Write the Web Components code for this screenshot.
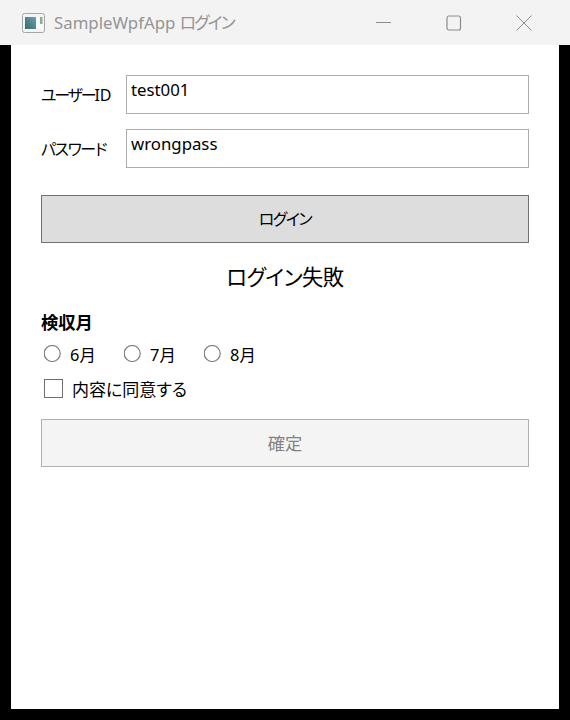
<!DOCTYPE html>
<html lang="ja">
<head>
<meta charset="utf-8">
<title>SampleWpfApp ログイン</title>
<style>
  html, body { margin: 0; height: 100%; background: #000; }
  body { font-family: "Noto Sans", "Noto Sans CJK JP", sans-serif; font-size: 16px; color: #000; font-feature-settings: "palt"; }
</style>
</head>
<body>
<wpf-window caption="SampleWpfApp" caption-kana="ログイン">
  <form-row label="ユーザー" label-latin="ID" tight value="test001"></form-row>
  <form-row label="パスワード" value="wrongpass"></form-row>
  <wpf-button kana style="margin-top:12px">ログイン</wpf-button>
  <status-text>ログイン失敗</status-text>
  <month-group label="検収月" months="6月,7月,8月"></month-group>
  <agree-check>内容に同意する</agree-check>
  <wpf-button disabled style="margin-top:20px">確定</wpf-button>
</wpf-window>

<script>
class WpfWindow extends HTMLElement {
  constructor() {
    super();
    this.attachShadow({ mode: 'open' });
  }

  connectedCallback() {
    const caption = this.getAttribute('caption') || '';
    const kana = this.getAttribute('caption-kana') || '';
    this.shadowRoot.innerHTML = `
      <style>
        :host { display: flex; flex-direction: column; height: 720px; width: 570px; background: #000; }
        .bar { height: 45px; background: #f3f3f3; display: flex; align-items: center; flex-shrink: 0; }
        .app-icon { margin-left: 22px; width: 24px; height: 20px; flex-shrink: 0; }
        .caption { margin-left: 8px; margin-top: -2px; font-size: 16.8px; color: #959595; white-space: nowrap; flex: 1; }
        .caption span { letter-spacing: -1.8px; }
        .btns { display: flex; height: 100%; margin-right: 11px; }
        .btn { width: 70px; display: flex; align-items: center; justify-content: center; }
        .client { flex: 1; margin: 0 11px 11px; background: #fff; padding: 30px 30px 0; display: flex; flex-direction: column; }
      </style>
      <div class="bar">
        <svg class="app-icon" viewBox="0 0 24 20">
          <defs><linearGradient id="g" x1="0" y1="1" x2="1" y2="0"><stop offset="0" stop-color="#35705f"/><stop offset="1" stop-color="#6a9fc0"/></linearGradient></defs>
          <rect x=".5" y=".5" width="22" height="19" rx="2" fill="#f4f4f4" stroke="#a6a6a6"/>
          <rect x="3" y="4" width="11" height="12" fill="url(#g)"/>
          <rect x="15" y="4" width="1.5" height="12" fill="#fff"/>
          <rect x="18" y="4" width="2.5" height="7" fill="#7db58e"/>
          <rect x="14" y="11" width="6.5" height="5" fill="#fbfbfb"/>
        </svg>
        <span class="caption">${caption} <span>${kana}</span></span>
        <div class="btns">
          <div class="btn"><svg width="16" height="16" viewBox="0 0 16 16"><path d="M0 7.5H15" stroke="#8e8e8e" fill="none"/></svg></div>
          <div class="btn"><svg width="16" height="16" viewBox="0 0 16 16"><rect x="1" y="1" width="13.5" height="14" rx="2" stroke="#8e8e8e" stroke-width="1.2" fill="none"/></svg></div>
          <div class="btn"><svg width="16" height="16" viewBox="0 0 16 16"><path d="M.5.5L15.5 15.5M15.5.5L.5 15.5" stroke="#8e8e8e" fill="none"/></svg></div>
        </div>
      </div>
      <div class="client"><slot></slot></div>
    `;
  }
}

class FormRow extends HTMLElement {
  constructor() {
    super();
    this.attachShadow({ mode: 'open' });
  }

  connectedCallback() {
    const latin = this.getAttribute('label-latin') || '';
    this.shadowRoot.innerHTML = `
      <style>
        :host { display: flex; align-items: center; height: 39px; margin-bottom: 15px; }
        .label { width: 85px; white-space: nowrap; font-size: 16px; margin-top: -1px; }
        .label span { letter-spacing: -1.4px; }
        :host([tight]) .label span { letter-spacing: -2.2px; }
        .box { flex: 1; height: 39px; box-sizing: border-box; border: 1px solid #ababb0; padding: 2px 4px; line-height: 24px; font-size: 16.8px; }
      </style>
      <span class="label"><span>${this.getAttribute('label')}</span>${latin}</span>
      <div class="box">${this.getAttribute('value')}</div>
    `;
  }
}

class WpfButton extends HTMLElement {
  constructor() {
    super();
    this.attachShadow({ mode: 'open' });
  }

  connectedCallback() {
    this.shadowRoot.innerHTML = `
      <style>
        :host { display: flex; align-items: center; justify-content: center; height: 48px; box-sizing: border-box; padding-bottom: 2px; border: 1px solid #707070; background: #ddd; font-size: 16px; }
        :host([kana]) { letter-spacing: -1.5px; }
        :host([disabled]) { border-color: #adb2b5; background: #f4f4f4; color: #838383; font-size: 17.3px; }
      </style>
      <slot></slot>
    `;
  }
}

class StatusText extends HTMLElement {
  constructor() {
    super();
    this.attachShadow({ mode: 'open' });
  }

  connectedCallback() {
    this.shadowRoot.innerHTML = `
      <style>
        :host { display: block; text-align: center; font-size: 21.3px; letter-spacing: -.5px; line-height: 30px; margin-top: 19px; }
      </style>
      <slot></slot>
    `;
  }
}

class MonthGroup extends HTMLElement {
  constructor() {
    super();
    this.attachShadow({ mode: 'open' });
  }

  connectedCallback() {
    const months = (this.getAttribute('months') || '').split(',');
    this.shadowRoot.innerHTML = `
      <style>
        :host { display: block; margin-top: 20px; }
        .title { font-weight: 700; font-size: 17.3px; line-height: 22px; }
        .list { display: flex; margin-top: 9px; padding-left: 3px; }
        .item { display: flex; align-items: center; width: 80px; height: 22px; font-size: 16.4px; }
        svg { width: 18px; height: 18px; margin-right: 8px; flex-shrink: 0; }
      </style>
      <div class="title">${this.getAttribute('label')}</div>
      <div class="list">
        ${months.map((m) => `
          <div class="item">
            <svg viewBox="0 0 18 18"><circle cx="8.2" cy="8.5" r="8" fill="#fff" stroke="#7a7a7a" stroke-width="1.2"/></svg>
            <span>${m}</span>
          </div>`).join('')}
      </div>
    `;
  }
}

class AgreeCheck extends HTMLElement {
  constructor() {
    super();
    this.attachShadow({ mode: 'open' });
  }

  connectedCallback() {
    this.shadowRoot.innerHTML = `
      <style>
        :host { display: flex; align-items: center; height: 22px; margin-top: 12px; padding-left: 3px; font-size: 17px; }
        .box { width: 19px; height: 19px; box-sizing: border-box; border: 1px solid #6f6f6f; background: #fff; margin-right: 9px; flex-shrink: 0; }
      </style>
      <div class="box"></div>
      <slot></slot>
    `;
  }
}

customElements.define('wpf-window', WpfWindow);
customElements.define('form-row', FormRow);
customElements.define('wpf-button', WpfButton);
customElements.define('status-text', StatusText);
customElements.define('month-group', MonthGroup);
customElements.define('agree-check', AgreeCheck);
</script>
</body>
</html>
